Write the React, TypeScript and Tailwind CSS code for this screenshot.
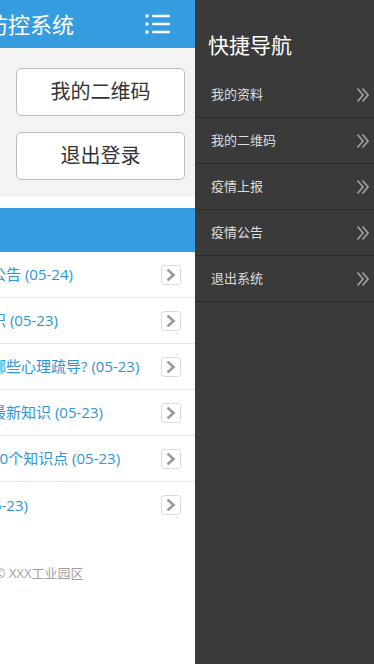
import React from 'react';

const notices = [
  { title: '园区疫情防控工作紧急公告', date: '05-24' },
  { title: '新型冠状病毒防护小知识', date: '05-23' },
  { title: '疫情期间居家隔离需要哪些心理疏导?', date: '05-23' },
  { title: '关于新冠肺炎疫情防控最新知识', date: '05-23' },
  { title: '疫情防控中需要掌握的10个知识点', date: '05-23' },
  { title: '本园区复工复产须知', date: '05-23' },
];

const navItems = ['我的资料', '我的二维码', '疫情上报', '疫情公告', '退出系统'];

function MenuIcon() {
  return (
    <svg width="26" height="22" viewBox="0 0 26 22" fill="#fff">
      <circle cx="2" cy="3" r="1.8" />
      <circle cx="2" cy="11" r="1.8" />
      <circle cx="2" cy="19" r="1.8" />
      <rect x="7" y="1.7" width="18" height="2.6" rx="1" />
      <rect x="7" y="9.7" width="18" height="2.6" rx="1" />
      <rect x="7" y="17.7" width="18" height="2.6" rx="1" />
    </svg>
  );
}

function ArrowBox() {
  return (
    <span className="flex h-[20px] w-[20px] items-center justify-center rounded-[3px] border border-[#dcdcdc] bg-white">
      <svg width="10" height="12" viewBox="0 0 10 12" fill="none" stroke="#999" strokeWidth="2.6" strokeLinecap="square">
        <path d="M2.5 1.5 L7.5 6 L2.5 10.5" />
      </svg>
    </span>
  );
}

function DoubleChevron() {
  return (
    <svg width="14" height="16" viewBox="0 0 14 16" fill="none" stroke="#a0a0a0" strokeWidth="1.7">
      <path d="M1.5 1.5 L7 8 L1.5 14.5" />
      <path d="M6.5 1.5 L12 8 L6.5 14.5" />
    </svg>
  );
}

export default function App() {
  return (
    <div
      className="flex h-[664px] w-[374px] overflow-hidden bg-white"
      style={{ fontFamily: '"Open Sans", "Noto Sans CJK SC", sans-serif' }}
    >
      {/* main page, pushed left by the drawer */}
      <div className="ml-[-179px] w-[374px] shrink-0 bg-white">
        <header className="relative flex h-12 items-center justify-center bg-[#359ddf]">
          <h1 className="text-[22px] leading-none text-white">疫情防控系统</h1>
          <button className="absolute right-[24px] top-[13px]">
            <MenuIcon />
          </button>
        </header>

        <section className="flex items-center bg-[#f4f4f4] pl-4 pr-[10px] pt-5 pb-[17px]">
          <div className="flex flex-1 items-center gap-3">
            <div className="h-14 w-14 rounded-full bg-[#d8d8d8]" />
            <div className="text-[15px] leading-5 text-[#333]">张三</div>
          </div>
          <div className="flex w-[169px] flex-col gap-4">
            <button className="h-12 rounded-[5px] border border-[#bdbdbd] bg-white text-[20px] text-[#333]">
              我的二维码
            </button>
            <button className="h-12 rounded-[5px] border border-[#bdbdbd] bg-white text-[20px] text-[#333]">
              退出登录
            </button>
          </div>
        </section>

        <div className="mt-[11px] flex h-11 items-center bg-[#359ddf] px-3 text-[17px] text-white">疫情公告</div>

        <ul>
          {notices.map((n, i) => (
            <li
              key={i}
              className={`flex h-[46px] items-center justify-between pl-5 pr-[14px] ${i < notices.length - 1 ? 'border-b border-[#e5e5e5]' : ''}`}
            >
              <span className="whitespace-nowrap text-[15px] text-[#2d95dc]">
                {n.title} ({n.date})
              </span>
              <ArrowBox />
            </li>
          ))}
        </ul>

        <footer className="mt-[36px] text-center text-[13px] text-[#a0a0a0]">Copyright © XXX工业园区</footer>
      </div>

      {/* quick nav drawer */}
      <aside className="w-[179px] shrink-0 bg-[#3a3a3a]">
        <h2 className="px-[13px] pt-[31px] pb-[13px] text-[21px] leading-[28px] text-white">快捷导航</h2>
        <ul>
          {navItems.map((t) => (
            <li key={t} className="flex h-[46px] items-center justify-between border-b border-[#2a2a2a] pl-4 pr-[4px]">
              <span className="text-[13px] text-[#dedede]">{t}</span>
              <DoubleChevron />
            </li>
          ))}
        </ul>
      </aside>
    </div>
  );
}
